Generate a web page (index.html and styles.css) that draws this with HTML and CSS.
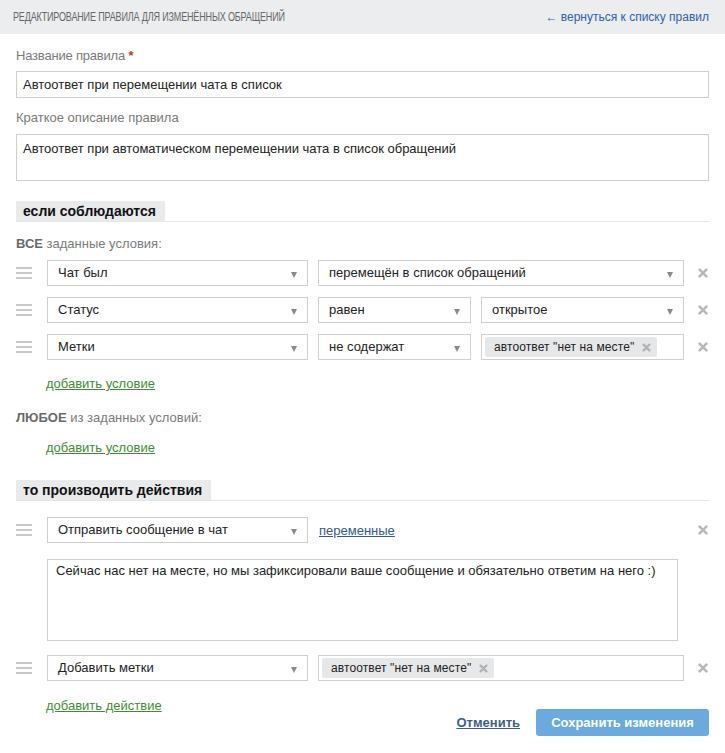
FILE: index.html
```html
<!DOCTYPE html>
<html lang="ru">
<head>
<meta charset="utf-8">
<title>Редактирование правила</title>
<link rel="stylesheet" href="styles.css">
</head>
<body>
<div class="header">
  <span class="header-title">РЕДАКТИРОВАНИЕ ПРАВИЛА ДЛЯ ИЗМЕНЁННЫХ ОБРАЩЕНИЙ</span>
  <a class="back-link" href="#">← вернуться к списку правил</a>
</div>
<div class="content">
  <div class="label first">Название правила <span class="req">*</span></div>
  <div class="input">Автоответ при перемещении чата в список</div>
  <div class="label">Краткое описание правила</div>
  <div class="input area">Автоответ при автоматическом перемещении чата в список обращений</div>

  <div class="section"><span class="section-title">если соблюдаются</span></div>
  <div class="sub"><b>ВСЕ</b> заданные условия:</div>

  <div class="row r-first">
    <span class="handle"><i></i><i></i><i></i></span>
    <div class="fields">
      <div class="select w1">Чат был<span class="arrow"></span></div>
      <div class="select grow">перемещён в список обращений<span class="arrow"></span></div>
    </div>
    <span class="remove"><svg viewBox="0 0 10 10" width="10" height="10"><path d="M1.6 1.6L8.4 8.4M8.4 1.6L1.6 8.4"/></svg></span>
  </div>
  <div class="row">
    <span class="handle"><i></i><i></i><i></i></span>
    <div class="fields">
      <div class="select w1">Статус<span class="arrow"></span></div>
      <div class="select w2">равен<span class="arrow"></span></div>
      <div class="select grow">открытое<span class="arrow"></span></div>
    </div>
    <span class="remove"><svg viewBox="0 0 10 10" width="10" height="10"><path d="M1.6 1.6L8.4 8.4M8.4 1.6L1.6 8.4"/></svg></span>
  </div>
  <div class="row">
    <span class="handle"><i></i><i></i><i></i></span>
    <div class="fields">
      <div class="select w1">Метки<span class="arrow"></span></div>
      <div class="select w2">не содержат<span class="arrow"></span></div>
      <div class="tags grow"><span class="tag">автоответ "нет на месте"<svg class="tag-x" viewBox="0 0 10 10" width="9" height="9"><path d="M1.8 1.8L8.2 8.2M8.2 1.8L1.8 8.2"/></svg></span></div>
    </div>
    <span class="remove"><svg viewBox="0 0 10 10" width="10" height="10"><path d="M1.6 1.6L8.4 8.4M8.4 1.6L1.6 8.4"/></svg></span>
  </div>
  <div class="add add-1"><a href="#">добавить условие</a></div>
  <div class="sub any"><b>ЛЮБОЕ</b> из заданных условий:</div>
  <div class="add add-2"><a href="#">добавить условие</a></div>

  <div class="section s2"><span class="section-title">то производить действия</span></div>

  <div class="row r-action">
    <span class="handle"><i></i><i></i><i></i></span>
    <div class="fields">
      <div class="select w1">Отправить сообщение в чат<span class="arrow"></span></div>
      <a class="vars" href="#">переменные</a>
    </div>
    <span class="remove"><svg viewBox="0 0 10 10" width="10" height="10"><path d="M1.6 1.6L8.4 8.4M8.4 1.6L1.6 8.4"/></svg></span>
  </div>
  <div class="message">Сейчас нас нет на месте, но мы зафиксировали ваше сообщение и обязательно ответим на него :)</div>
  <div class="row r-tags">
    <span class="handle"><i></i><i></i><i></i></span>
    <div class="fields">
      <div class="select w1">Добавить метки<span class="arrow"></span></div>
      <div class="tags grow"><span class="tag">автоответ "нет на месте"<svg class="tag-x" viewBox="0 0 10 10" width="9" height="9"><path d="M1.8 1.8L8.2 8.2M8.2 1.8L1.8 8.2"/></svg></span></div>
    </div>
    <span class="remove"><svg viewBox="0 0 10 10" width="10" height="10"><path d="M1.6 1.6L8.4 8.4M8.4 1.6L1.6 8.4"/></svg></span>
  </div>
  <div class="footer">
    <a class="add-action" href="#">добавить действие</a>
    <div class="buttons">
      <a class="cancel" href="#">Отменить</a>
      <span class="save">Сохранить изменения</span>
    </div>
  </div>
</div>
</body>
</html>
```

FILE: styles.css
```css
* { box-sizing: border-box; }
html, body { margin: 0; padding: 0; background: #fff; }
body {
  font-family: "Liberation Sans", Arial, sans-serif;
  font-size: 13px;
  color: #222;
  width: 725px;
}
a { text-decoration: none; }

.header {
  height: 34px;
  background: #ebedef;
  display: flex;
  justify-content: space-between;
  align-items: center;
  padding: 0 16px 0 13px;
}
.header-title {
  display: inline-block;
  font-size: 12.5px;
  color: #666;
  letter-spacing: -0.2px;
  transform: scaleX(0.72);
  transform-origin: left center;
  white-space: nowrap;
}
.back-link {
  font-size: 12px;
  color: #2d62a6;
  letter-spacing: 0;
}

.content { padding: 0 16px; }

.label {
  color: #7a7a7a;
  line-height: 16px;
  margin-top: 12px;
}
.label.first { margin-top: 14px; letter-spacing: -0.2px; }
.req { color: #d0312d; font-weight: bold; }

.input {
  margin-top: 7px;
  height: 27px;
  border: 1px solid #cfcfcf;
  padding: 5px 6px 0;
  line-height: 16px;
}
.input.area { height: 47px; margin-top: 8px; padding-top: 6px; }

.section {
  margin-top: 20px;
  border-bottom: 1px solid #e6e6e6;
  display: flex;
}
.section.s2 { margin-top: 24px; }
.section-title {
  background: #e9eaec;
  font-weight: bold;
  font-size: 14px;
  color: #111;
  height: 20px;
  line-height: 20px;
  padding: 0 9px 0 7px;
}

.sub {
  color: #7a7a7a;
  margin-top: 14px;
  line-height: 16px;
}
.sub b { color: #6a6a6a; }
.sub.any { margin-top: 18px; }

.row {
  display: grid;
  grid-template-columns: 31px 1fr 25px;
  align-items: center;
  margin-top: 11px;
  height: 26px;
}
.row.r-first { margin-top: 8px; }
.row.r-action { margin-top: 16px; }
.row.r-tags { margin-top: 14px; }

.handle {
  display: flex;
  flex-direction: column;
  gap: 3px;
  width: 16px;
}
.handle i {
  display: block;
  height: 2px;
  background: #c8c8c8;
}

.fields {
  display: flex;
  gap: 10px;
  align-items: center;
  height: 26px;
}
.select, .tags {
  height: 26px;
  border: 1px solid #cfcfcf;
  position: relative;
  padding: 0 10px;
  line-height: 24px;
  background: #fff;
}
.w1 { width: 261px; flex: none; }
.w2 { width: 153px; flex: none; }
.grow { flex: 1; }
.arrow {
  position: absolute;
  right: 10px;
  top: 11px;
  width: 0;
  height: 0;
  border-left: 3.5px solid transparent;
  border-right: 3.5px solid transparent;
  border-top: 6px solid #8a8a8a;
}
.tags { padding: 2px 3px; line-height: 20px; }
.tag {
  display: inline-flex;
  align-items: center;
  gap: 8px;
  background: #e6e7e9;
  border-radius: 2px;
  height: 20px;
  padding: 0 6px 0 9px;
  font-size: 12px;
  letter-spacing: 0.1px;
  color: #222;
}
.tag-x path {
  stroke: #b3b3b3;
  stroke-width: 2.6;
  stroke-linecap: round;
  fill: none;
}

.remove {
  display: flex;
  justify-content: flex-end;
  padding-right: 1px;
}
.remove path {
  stroke: #b8b8b8;
  stroke-width: 2.6;
  stroke-linecap: round;
  fill: none;
}

.vars {
  color: #2f5a93;
  text-decoration: underline;
  margin-left: 1px;
}

.add { padding-left: 30px; line-height: 16px; }
.add a { color: #3f8c34; text-decoration: underline; }
.add-1 { margin-top: 16px; }
.add-2 { margin-top: 14px; }

.message {
  margin: 16px 31px 0 31px;
  height: 82px;
  border: 1px solid #cfcfcf;
  padding: 3px 8px;
  line-height: 16px;
}

.footer {
  display: flex;
  justify-content: space-between;
  align-items: flex-start;
  margin-top: 17px;
  padding-left: 30px;
}
.add-action {
  color: #3f8c34;
  text-decoration: underline;
  line-height: 16px;
}
.buttons {
  display: flex;
  align-items: center;
  gap: 16px;
  margin-top: 11px;
}
.cancel {
  color: #3b5e8e;
  font-weight: bold;
  text-decoration: underline;
}
.save {
  display: block;
  width: 173px;
  height: 27px;
  line-height: 27px;
  text-align: center;
  background: #6aaade;
  color: #fff;
  font-weight: bold;
  border-radius: 3px;
}
```
